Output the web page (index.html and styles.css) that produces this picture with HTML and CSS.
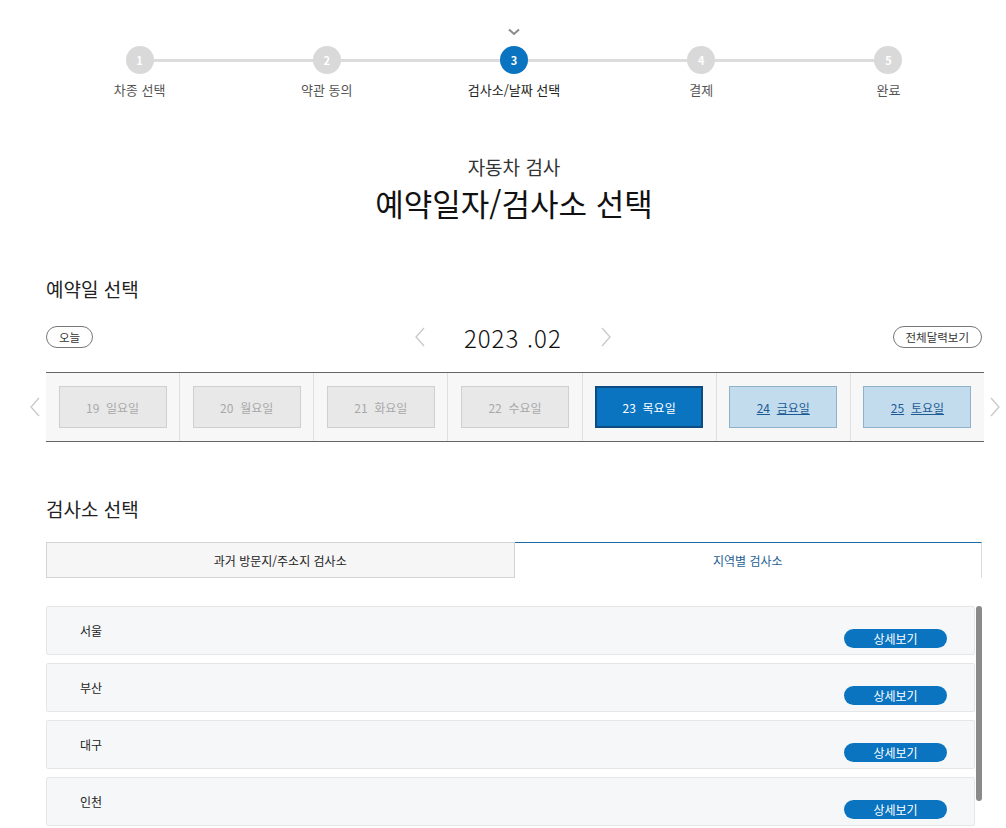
FILE: index.html
```html
<!DOCTYPE html>
<html lang="ko">
<head>
    <meta charset="UTF-8">
    <title>자동차 검사 예약</title>
    <link rel="stylesheet" href="styles.css">
</head>
<body>
<div class="wrapper">
    <ol class="steps">
        <li class="step"><span class="num">1</span><span class="label">차종 선택</span></li>
        <li class="step"><span class="num">2</span><span class="label">약관 동의</span></li>
        <li class="step current">
            <svg class="mark" width="12" height="8" viewBox="0 0 12 8"><path d="M1 1.5 L6 6 L11 1.5" fill="none" stroke="#8a8a8a" stroke-width="2"/></svg>
            <span class="num">3</span><span class="label">검사소/날짜 선택</span>
        </li>
        <li class="step"><span class="num">4</span><span class="label">결제</span></li>
        <li class="step"><span class="num">5</span><span class="label">완료</span></li>
    </ol>

    <div class="page_title">
        <p class="sub">자동차 검사</p>
        <h1>예약일자/검사소 선택</h1>
    </div>

    <h2 class="section_title">예약일 선택</h2>
    <div class="month_bar">
        <button class="pill">오늘</button>
        <div class="month">
            <svg width="12" height="20" viewBox="0 0 12 20"><path d="M10 1 L2 10 L10 19" fill="none" stroke="#c8c8c8" stroke-width="1.3"/></svg>
            <span>2023 .02</span>
            <svg width="12" height="20" viewBox="0 0 12 20"><path d="M2 1 L10 10 L2 19" fill="none" stroke="#c8c8c8" stroke-width="1.3"/></svg>
        </div>
        <button class="pill">전체달력보기</button>
    </div>

    <div class="days_wrap">
        <svg class="arrow" width="12" height="20" viewBox="0 0 12 20"><path d="M10 1 L2 10 L10 19" fill="none" stroke="#c8c8c8" stroke-width="1.3"/></svg>
        <ul class="days">
            <li><span class="day off">19&nbsp;&nbsp;일요일</span></li>
            <li><span class="day off">20&nbsp;&nbsp;월요일</span></li>
            <li><span class="day off">21&nbsp;&nbsp;화요일</span></li>
            <li><span class="day off">22&nbsp;&nbsp;수요일</span></li>
            <li><span class="day selected">23&nbsp;&nbsp;목요일</span></li>
            <li><a class="day open" href="#"><u>24</u>&nbsp;&nbsp;<u>금요일</u></a></li>
            <li><a class="day open" href="#"><u>25</u>&nbsp;&nbsp;<u>토요일</u></a></li>
        </ul>
        <svg class="arrow" width="12" height="20" viewBox="0 0 12 20"><path d="M2 1 L10 10 L2 19" fill="none" stroke="#c8c8c8" stroke-width="1.3"/></svg>
    </div>

    <h2 class="section_title second">검사소 선택</h2>
    <div class="tabs">
        <button class="tab">과거 방문지/주소지 검사소</button>
        <button class="tab active">지역별 검사소</button>
    </div>

    <div class="centers_box">
        <ul class="centers">
            <li><span class="name">서울</span><button class="detail">상세보기</button></li>
            <li><span class="name">부산</span><button class="detail">상세보기</button></li>
            <li><span class="name">대구</span><button class="detail">상세보기</button></li>
            <li><span class="name">인천</span><button class="detail">상세보기</button></li>
            <li><span class="name">광주</span><button class="detail">상세보기</button></li>
        </ul>
        <div class="scroll_track"><div class="scroll_thumb"></div></div>
    </div>
</div>
</body>
</html>
```

FILE: styles.css
```css
body {
    margin: 0;
    font-family: "Noto Sans CJK KR", "Noto Sans", sans-serif;
    color: #222;
    background: #fff;
}

.wrapper {
    width: 936px;
    margin-left: 46px;
}

/* steps */
.steps {
    position: relative;
    display: flex;
    list-style: none;
    margin: 0;
    padding: 46px 0 0;
}

.steps::before {
    content: "";
    position: absolute;
    left: 94px;
    right: 94px;
    top: 59px;
    height: 3px;
    background: #dcdcdc;
}

.step {
    position: relative;
    flex: 1;
    display: flex;
    flex-direction: column;
    align-items: center;
}

.step .num {
    position: relative;
    width: 28px;
    height: 28px;
    border-radius: 50%;
    background: #d9d9d9;
    color: #fff;
    font-size: 11px;
    font-weight: bold;
    line-height: 28px;
    text-align: center;
}

.step .label {
    margin-top: 7px;
    font-size: 13px;
    color: #555;
    line-height: 18px;
}

.step.current .num {
    background: #0a74c0;
}

.step.current .label {
    color: #222;
}

.step .mark {
    position: absolute;
    top: -18px;
}

/* title */
.page_title {
    text-align: center;
    margin-top: 55px;
}

.page_title .sub {
    margin: 0;
    font-size: 19px;
    line-height: 26px;
    color: #333;
}

.page_title h1 {
    margin: 3px 0 0;
    font-size: 31px;
    font-weight: normal;
    line-height: 40px;
    color: #111;
}

.section_title {
    margin: 53px 0 0;
    font-size: 19px;
    font-weight: normal;
    line-height: 26px;
    color: #222;
}

.section_title.second {
    margin-top: 54px;
}

/* month */
.month_bar {
    display: flex;
    justify-content: space-between;
    align-items: center;
    margin-top: 21px;
    height: 28px;
}

.pill {
    height: 22px;
    padding: 0 12px;
    border: 1px solid #777;
    border-radius: 11px;
    background: #fff;
    font-family: inherit;
    font-size: 11.5px;
    color: #333;
    line-height: 20px;
}

.month {
    display: flex;
    align-items: center;
    gap: 38px;
    margin-left: 40px;
}

.month span {
    font-size: 24px;
    font-weight: 300;
    color: #111;
    letter-spacing: 1px;
}

/* day strip */
.days_wrap {
    display: flex;
    align-items: center;
    margin: 21px -24px 0 -22px;
}

.days_wrap .arrow {
    width: 22px;
    flex: none;
}

.days {
    flex: 1;
    display: flex;
    list-style: none;
    margin: 0;
    padding: 0;
    border-top: 1px solid #666;
    border-bottom: 1px solid #666;
    background: #f7f7f7;
}

.days li {
    flex: 1;
    height: 68px;
    display: flex;
    align-items: center;
    justify-content: center;
    border-left: 1px solid #e0e0e0;
}

.days li:first-child {
    border-left: none;
}

.day {
    box-sizing: border-box;
    width: 108px;
    height: 42px;
    display: flex;
    align-items: center;
    justify-content: center;
    font-size: 12px;
    text-decoration: none;
}

.day.off {
    background: #e8e8e8;
    border: 1px solid #cfcfcf;
    color: #a8a8a8;
}

.day.selected {
    background: #0a74c0;
    border: 2px solid #0c4c80;
    color: #fff;
}

.day.open {
    background: #c2dcee;
    border: 1px solid #8eb2cc;
    color: #1c5b94;
}

/* tabs */
.tabs {
    display: flex;
    margin-top: 20px;
}

.tab {
    flex: 1;
    height: 36px;
    font-family: inherit;
    font-size: 12px;
    color: #222;
    background: #f6f6f6;
    border: 1px solid #d4d4d4;
}

.tab.active {
    background: #fff;
    color: #1d5f94;
    border: none;
    border-top: 1px solid #1d6aa4;
    border-right: 1px solid #d8dde2;
}

/* centers */
.centers_box {
    display: flex;
    gap: 1px;
    margin-top: 28px;
    height: 222px;
    overflow: hidden;
}

.centers {
    flex: 1;
    list-style: none;
    margin: 0;
    padding: 0;
}

.centers li {
    box-sizing: border-box;
    height: 49px;
    margin-bottom: 8px;
    padding: 0 27px 0 33px;
    display: flex;
    justify-content: space-between;
    align-items: flex-start;
    background: #f6f7f8;
    border: 1px solid #e4e6e8;
    border-radius: 2px;
}

.centers .name {
    margin-top: 15px;
    font-size: 12px;
    color: #222;
}

.centers .detail {
    margin-top: 22px;
    width: 103px;
    height: 19px;
    border: none;
    border-radius: 10px;
    background: #0a74c0;
    color: #fff;
    font-family: inherit;
    font-size: 12px;
    line-height: 19px;
    padding: 0;
}

.scroll_track {
    width: 6px;
}

.scroll_thumb {
    height: 195px;
    border-radius: 3px;
    background: #8a8a8a;
}
```
